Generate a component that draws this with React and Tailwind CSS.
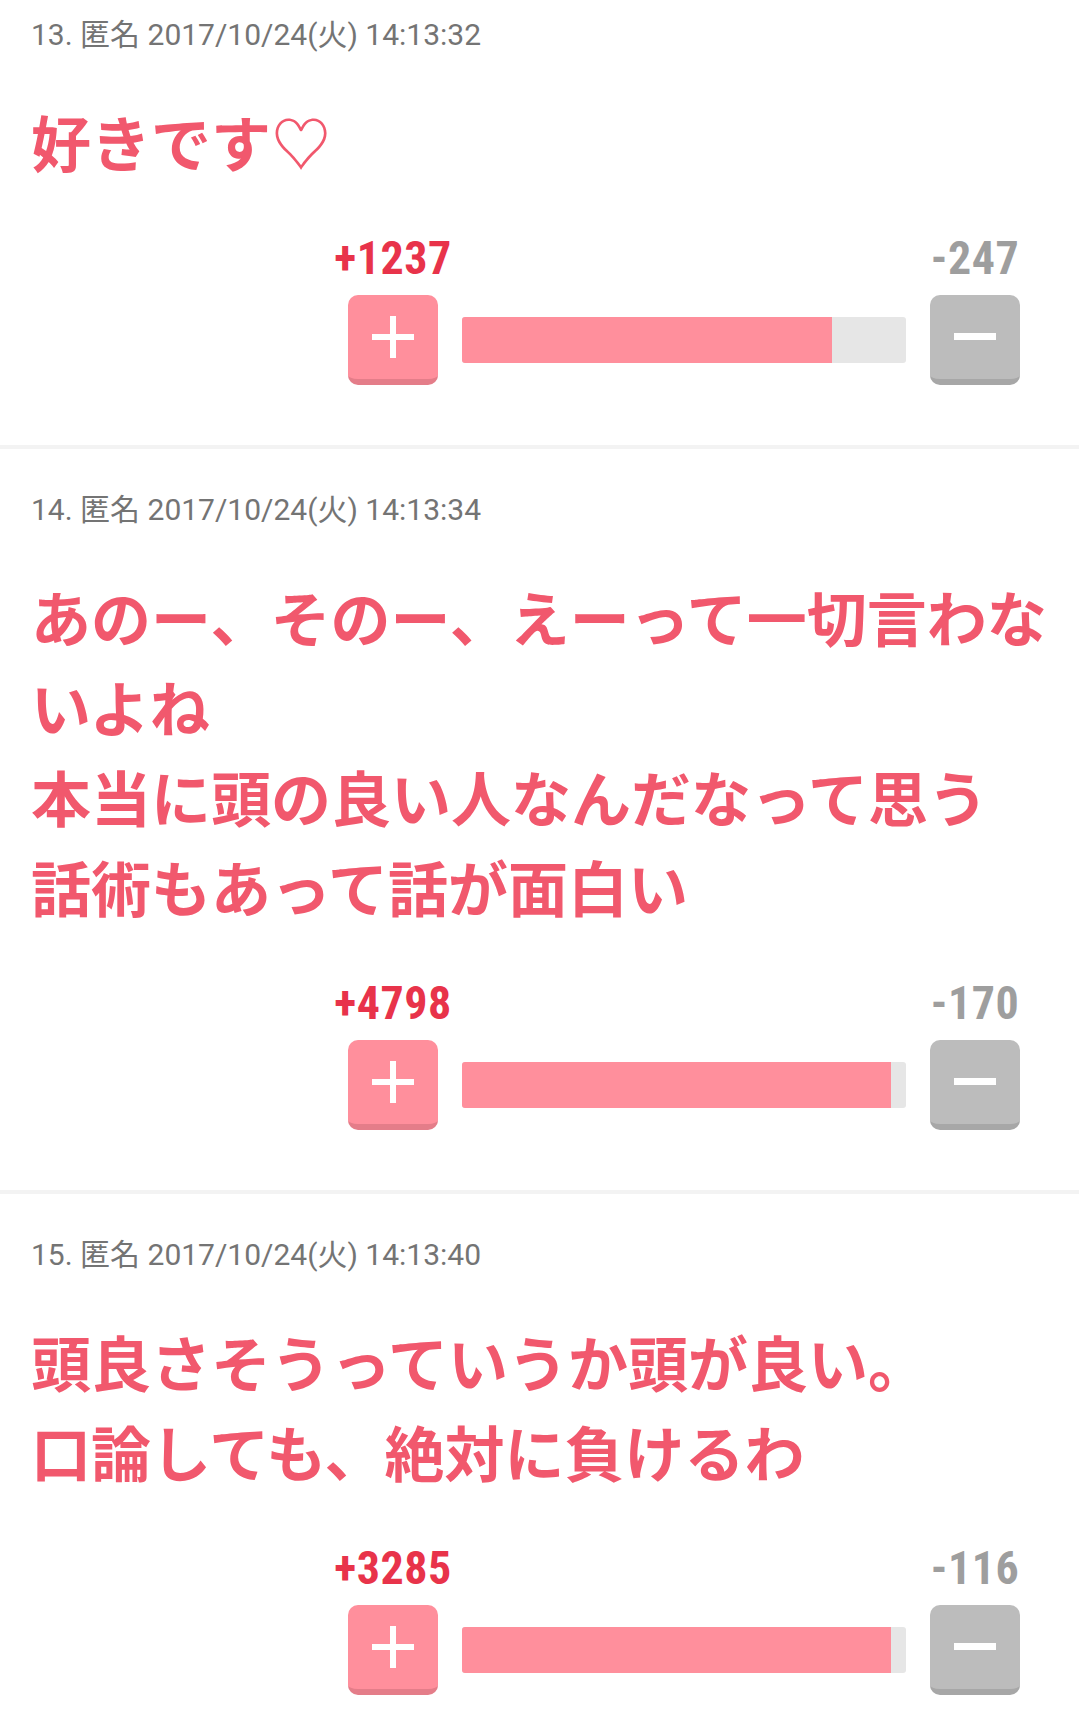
import React from 'react'

const comments = [
	{
		no: 13,
		date: '2017/10/24(火) 14:13:32',
		body: '好きです♡',
		plus: 1237,
		minus: 247,
	},
	{
		no: 14,
		date: '2017/10/24(火) 14:13:34',
		body: 'あのー、そのー、えーって一切言わないよね\n本当に頭の良い人なんだなって思う\n話術もあって話が面白い',
		plus: 4798,
		minus: 170,
	},
	{
		no: 15,
		date: '2017/10/24(火) 14:13:40',
		body: '頭良さそうっていうか頭が良い。\n口論しても、絶対に負けるわ',
		plus: 3285,
		minus: 116,
	},
]

const jp = { fontFamily: '"Noto Sans CJK JP", "Noto Sans", sans-serif' }
const meta = { fontFamily: 'Roboto, "Noto Sans CJK JP", sans-serif' }
const num = { fontFamily: '"Liberation Sans Narrow", "Roboto Condensed", Roboto, sans-serif' }

// 投票バー
function Vote({ plus, minus }) {
	const ratio = (plus / (plus + minus)) * 100
	return (
		<div className="flex justify-end pr-[59px]">
			<div className="w-[672px]">
				<div className="flex justify-between h-[48px] items-center">
					<div className="w-[90px] flex justify-center text-[46px] font-bold text-[#e8334a] leading-none whitespace-nowrap tracking-[0.5px]" style={num}>
						+{plus}
					</div>
					<div className="w-[90px] flex justify-center text-[46px] font-bold text-[#9e9e9e] leading-none whitespace-nowrap tracking-[0.5px]" style={num}>
						-{minus}
					</div>
				</div>
				<div className="mt-[13px] grid grid-cols-[90px_1fr_90px] gap-[24px] items-center">
					<div className="h-[90px] rounded-[10px] bg-[#ff8f9c] border-b-[6px] border-[#e47d89] flex items-center justify-center">
						<svg width="42" height="42" viewBox="0 0 42 42">
							<rect x="18" y="0" width="6" height="42" fill="#fff" />
							<rect x="0" y="18" width="42" height="6" fill="#fff" />
						</svg>
					</div>
					<div className="h-[46px] rounded-[3px] bg-[#e6e6e6] overflow-hidden">
						<div className="h-full bg-[#ff8f9c]" style={{ width: `${ratio}%` }} />
					</div>
					<div className="h-[90px] rounded-[10px] bg-[#bcbcbc] border-b-[6px] border-[#a7a7a7] flex items-center justify-center">
						<svg width="42" height="8" viewBox="0 0 42 8">
							<rect x="0" y="0" width="42" height="7" fill="#fff" />
						</svg>
					</div>
				</div>
			</div>
		</div>
	)
}

function Comment({ c }) {
	return (
		<div className="pt-[41px] first:pt-[15px] pb-[60px] border-b-[4px] border-[#f3f3f3]">
			<div className="px-[31px] text-[30px] leading-[40px] text-[#747474]" style={meta}>
				{c.no}. 匿名 {c.date}
			</div>
			<div className="mt-[41px] pl-[31px] pr-[20px] text-[60px] leading-[90px] font-bold text-[#f1586d] whitespace-pre-line" style={jp}>
				{c.body}
			</div>
			<div className="mt-[48px]">
				<Vote plus={c.plus} minus={c.minus} />
			</div>
		</div>
	)
}

export default function App() {
	return (
		<div className="w-[1079px] h-[1726px] bg-white overflow-hidden">
			{comments.map(c => (
				<Comment key={c.no} c={c} />
			))}
		</div>
	)
}
